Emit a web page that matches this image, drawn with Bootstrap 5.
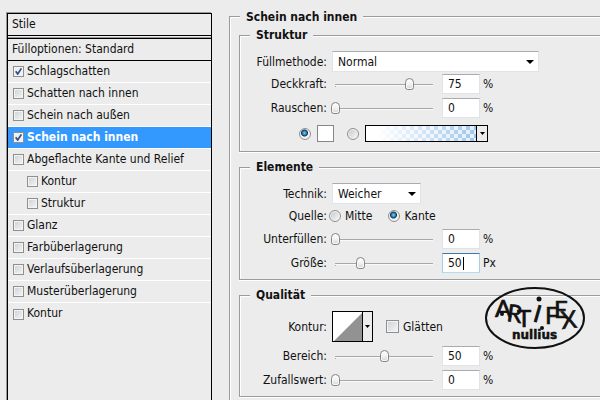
<!DOCTYPE html>
<html lang="de">
<head>
<meta charset="utf-8">
<meta name="viewport" content="width=device-width, initial-scale=1">
<title>Fülloptionen</title>
<link href="https://cdn.jsdelivr.net/npm/bootstrap@5.3.0/dist/css/bootstrap.min.css" rel="stylesheet">
<style>
  body { background: #ececec; color: #111; font-family: "DejaVu Sans Condensed", "DejaVu Sans", sans-serif; font-size: 12px; line-height: 16px; }
  .page { padding: 12px 0 0 6px; }
  .styles-panel { width: 205px; margin: 1px 17px 0 1px; border: solid #000; border-width: 1px 1px 0; box-shadow: -1px -1px 0 #999; }
  .styles-panel .list-group-item { height: 22px; padding: 0 0 2px 5px; gap: 3px; background: transparent; color: inherit; border: 0; border-bottom: 1px solid #fff; }
  .styles-panel .list-group-item.heading { padding: 0 0 2px 4px; border-bottom-color: #000; }
  .styles-panel .list-group-item.heading.options { height: 23px; padding-bottom: 1px; border-top: 1px solid #000; margin-top: 2px; box-shadow: 0 -1px 0 #999; }
  .styles-panel .list-group-item.sub { padding-left: 19px; }
  .styles-panel .list-group-item.active { margin-top: 0; background: #3399ff; color: #fff; font-weight: 700; }
  .group { border: 1px solid #9b9b9b; border-right: 0; box-shadow: inset 1px 1px 0 #fff, 0 1px 0 #fff; padding: 0 0 4px; }
  .group > legend { float: none; width: auto; margin: 0 0 0 10px; padding: 0 6px; font-size: 12px; line-height: 19px; font-weight: 700; background: #ececec; }
  .outer { border-bottom: 0; box-shadow: inset 1px 1px 0 #fff; padding: 0 0 0 9px; margin-top: -6px; }
  .outer > .group { margin-bottom: 6px; }
  .outer > .group > legend { margin-bottom: 6px; }
  .outer > legend { height: 20px; line-height: 22px; margin-left: 1px; }
  .field { min-height: 24px; }
  .name { width: 87px; flex: none; text-align: right; }
  .tick, .dot { appearance: none; flex: none; margin: 0; }
  .tick { width: 11px; height: 11px; border: 1px solid #8e8f8f; background: linear-gradient(135deg, #cdd0d5, #f6f6f6); box-shadow: inset 0 0 0 1px #f4f4f4; margin-top: 2px; }
  .tick:checked { background: url("data:image/svg+xml,%3Csvg xmlns='http://www.w3.org/2000/svg' viewBox='0 0 9 9'%3E%3Cpath d='M1.7 4.2L3.7 7L7.4 1.4' fill='none' stroke='%23354a80' stroke-width='1.7'/%3E%3C/svg%3E") center / 9px 9px no-repeat, #edf0f6; }
  .tick.big { width: 13px; height: 13px; margin-top: 0; }
  .dot { width: 12px; height: 12px; border: 1px solid #8e8f8f; border-radius: 50%; background: linear-gradient(135deg, #c4c7cc, #fafafa); box-shadow: inset 0 0 0 1px #f4f4f4; }
  .dot:checked { background: radial-gradient(circle at 45% 40%, #7ed0f2 0, #2382b2 2px, #102f50 3px, #f1f1f1 4px); box-shadow: none; }
  .drop { appearance: none; height: 21px; border: 1px solid #e0e3e8; border-top-color: #a9abb1; border-radius: 0; padding: 0 20px 0 5px; color: inherit; margin-left: 5px; background: #fff url("data:image/svg+xml,%3Csvg xmlns='http://www.w3.org/2000/svg' width='8' height='4'%3E%3Cpath d='M0 0H8L4 4Z'/%3E%3C/svg%3E") right 4px center no-repeat; }
  .wide { width: 207px; }
  .medium { width: 89px; }
  .slide { appearance: none; width: 107px; height: 16px; margin: 0 4px; flex: none; background: linear-gradient(#a5a8a8, #a5a8a8) 4px 8px / 98px 1px no-repeat, linear-gradient(#fafafa, #fafafa) 4px 9px / 98px 1px no-repeat, linear-gradient(#a5a8a8, #a5a8a8) 4px 8px / 1px 3px no-repeat; }
  .slide::-webkit-slider-thumb { appearance: none; width: 9px; height: 12px; border: 1px solid #858585; border-radius: 5px 5px 3px 3px; background: linear-gradient(#fff, #f2f2f2 50%, #d5d5d5); box-shadow: inset 0 0 0 1px #f8f8f8; }
  .amount { width: 38px; height: 20px; border: 1px solid #dfe3ea; border-top-color: #a9abb1; background: #fff; color: inherit; padding: 0 0 0 5px; margin-right: 3px; }
  .amount.current { border-color: #3d7bad #a9cce8 #b7d9ed; background: linear-gradient(#000, #000) 20px 3px / 1px 13px no-repeat, #fff; }
  .swatch { width: 17px; height: 17px; border: 1px solid #868686; background: #fff; padding: 0; margin: 0 13px 0 6px; }
  .ramp { width: 123px; height: 17px; border: 1px solid #000; padding: 0; background: #ececec; margin-left: 6px; }
  .ramp-fill { background: linear-gradient(90deg, #fff 10%, rgba(255,255,255,0)), conic-gradient(#9fc5ec 25%, #e3eff9 0 50%, #9fc5ec 0 75%, #e3eff9 0) 0 0 / 8px 8px; border-right: 1px solid #000; }
  .ramp-drop { width: 10px; }
  .curve { width: 41px; height: 31px; border: 1px solid #000; padding: 0; background: #ececec; margin: 0 13px 0 5px; }
  .colors { min-height: 27px; padding-left: 59px; }
  .source { min-height: 23px; }
  .source label { margin: 0 16px 0 2px; }
  .source label + label { margin-left: 0; }
  .contour { min-height: 33px; padding-bottom: 2px; }
  .logo { position: absolute; right: 14px; top: -26px; width: 102px; height: 66px; }
</style>
</head>
<body>
<main class="page d-flex min-vh-100">
  <div class="styles-panel flex-shrink-0">
    <div class="list-group list-group-flush rounded-0">
      <div class="list-group-item heading d-flex align-items-center">Stile</div>
      <div class="list-group-item heading options d-flex align-items-center">Fülloptionen: Standard</div>
      <label class="list-group-item d-flex align-items-center"><input class="tick" type="checkbox" checked>Schlagschatten</label>
      <label class="list-group-item d-flex align-items-center"><input class="tick" type="checkbox">Schatten nach innen</label>
      <label class="list-group-item d-flex align-items-center"><input class="tick" type="checkbox">Schein nach außen</label>
      <label class="list-group-item active d-flex align-items-center"><input class="tick" type="checkbox" checked>Schein nach innen</label>
      <label class="list-group-item d-flex align-items-center"><input class="tick" type="checkbox">Abgeflachte Kante und Relief</label>
      <label class="list-group-item sub d-flex align-items-center"><input class="tick" type="checkbox">Kontur</label>
      <label class="list-group-item sub d-flex align-items-center"><input class="tick" type="checkbox">Struktur</label>
      <label class="list-group-item d-flex align-items-center"><input class="tick" type="checkbox">Glanz</label>
      <label class="list-group-item d-flex align-items-center"><input class="tick" type="checkbox">Farbüberlagerung</label>
      <label class="list-group-item d-flex align-items-center"><input class="tick" type="checkbox">Verlaufsüberlagerung</label>
      <label class="list-group-item d-flex align-items-center"><input class="tick" type="checkbox">Musterüberlagerung</label>
      <label class="list-group-item d-flex align-items-center"><input class="tick" type="checkbox">Kontur</label>
    </div>
  </div>

  <fieldset class="group outer flex-grow-1">
    <legend>Schein nach innen</legend>

    <fieldset class="group">
      <legend>Struktur</legend>
      <div class="d-flex align-items-center">
        <label class="name" for="mode">Füllmethode:</label>
        <select class="drop wide" id="mode"><option>Normal</option></select>
      </div>
      <div class="field d-flex align-items-center">
        <label class="name" for="opacity">Deckkraft:</label>
        <input class="slide" type="range" value="75" aria-label="Deckkraft">
        <input class="amount" id="opacity" type="text" value="75"><span>%</span>
      </div>
      <div class="field d-flex align-items-center">
        <label class="name" for="noise">Rauschen:</label>
        <input class="slide" type="range" value="0" aria-label="Rauschen">
        <input class="amount" id="noise" type="text" value="0"><span>%</span>
      </div>
      <div class="colors d-flex align-items-center">
        <input class="dot" type="radio" name="fill" aria-label="Farbe" checked>
        <button class="swatch" type="button" aria-label="Farbe wählen"></button>
        <input class="dot" type="radio" name="fill" aria-label="Verlauf">
        <button class="ramp d-flex align-items-stretch" type="button" aria-label="Verlauf wählen">
          <span class="ramp-fill flex-grow-1"></span>
          <span class="ramp-drop d-flex align-items-center justify-content-center"><svg width="5" height="3"><path d="M0 0H5L2.500 3Z"/></svg></span>
        </button>
      </div>
    </fieldset>

    <fieldset class="group">
      <legend>Elemente</legend>
      <div class="d-flex align-items-center">
        <label class="name" for="technique">Technik:</label>
        <select class="drop medium" id="technique"><option>Weicher</option></select>
      </div>
      <div class="source d-flex align-items-center">
        <span class="name">Quelle:</span>
        <label class="d-flex align-items-center gap-1"><input class="dot" type="radio" name="source">Mitte</label>
        <label class="d-flex align-items-center gap-1"><input class="dot" type="radio" name="source" checked>Kante</label>
      </div>
      <div class="field d-flex align-items-center">
        <label class="name" for="choke">Unterfüllen:</label>
        <input class="slide" type="range" value="0" aria-label="Unterfüllen">
        <input class="amount" id="choke" type="text" value="0"><span>%</span>
      </div>
      <div class="field d-flex align-items-center">
        <label class="name" for="size">Größe:</label>
        <input class="slide" type="range" max="200" value="50" aria-label="Größe">
        <input class="amount current" id="size" type="text" value="50"><span>Px</span>
      </div>
    </fieldset>

    <fieldset class="group position-relative">
      <legend>Qualität</legend>
      <div class="contour d-flex align-items-center">
        <span class="name">Kontur:</span>
        <button class="curve d-flex" type="button" aria-label="Kontur wählen">
          <svg width="39" height="29"><path fill="#fff" d="M0 0H29V29H0Z"/><path fill="#929292" d="M1 29L29 1V29Z"/><path stroke="#000" d="M29.500 0V29"/><path d="M32 13H37L34.500 16Z"/></svg>
        </button>
        <label class="d-flex align-items-center gap-1"><input class="tick big" type="checkbox">Glätten</label>
      </div>
      <div class="field d-flex align-items-center">
        <label class="name" for="range">Bereich:</label>
        <input class="slide" type="range" value="50" aria-label="Bereich">
        <input class="amount" id="range" type="text" value="50"><span>%</span>
      </div>
      <div class="field d-flex align-items-center">
        <label class="name" for="jitter">Zufallswert:</label>
        <input class="slide" type="range" value="0" aria-label="Zufallswert">
        <input class="amount" id="jitter" type="text" value="0"><span>%</span>
      </div>
      <svg class="logo" viewBox="0 0 102 66" role="img" aria-label="Artifex nullius">
        <ellipse cx="51" cy="33" rx="49" ry="30" fill="none" stroke="#111" stroke-width="2"/>
        <text font-family="Lato, sans-serif" font-size="24" fill="#111" stroke="#111" stroke-width="0.700" x="11 22 33 48 61 70 78" y="32 36 42 36 39 33 44" rotate="0 8 0 16 0 0 -6">ARTIFEX</text>
        <circle cx="55" cy="14" r="2.500" fill="#111"/>
        <circle cx="18" cy="29" r="2" fill="#111"/>
        <circle cx="58" cy="43" r="2" fill="#111"/>
        <text x="28" y="54" font-family="DejaVu Sans, sans-serif" font-size="12" font-weight="700" fill="#111" stroke="#111" stroke-width="0.500">nullius</text>
      </svg>
    </fieldset>
  </fieldset>
</main>
<script src="https://cdn.jsdelivr.net/npm/bootstrap@5.3.0/dist/js/bootstrap.bundle.min.js"></script>
</body>
</html>
